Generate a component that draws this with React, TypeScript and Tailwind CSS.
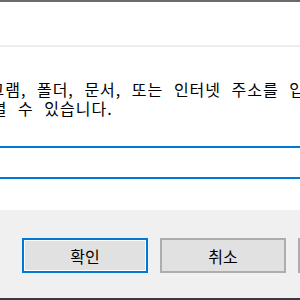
const font = "font-['Malgun_Gothic','Noto_Sans_CJK_KR',sans-serif]";

function DialogButton({ label, primary }: { label: string; primary?: boolean }) {
  return (
    <button
      className={
        primary
          ? "flex h-[35px] w-[126px] shrink-0 items-center justify-center border-2 border-[#0078d7] bg-[#e1e1e1] text-[16px] text-black shadow-[inset_0_0_0_1px_#ffffff]"
          : "flex h-[35px] w-[126px] shrink-0 items-center justify-center border-2 border-[#adadad] bg-[#e1e1e1] text-[16px] text-black"
      }
    >
      {label}
    </button>
  );
}

export default function App() {
  return (
    <div className={`flex h-[300px] w-[300px] flex-col overflow-hidden bg-white ${font}`}>
      {/* window edge */}
      <div className="h-[2px] shrink-0 bg-[#6b6b6b]" />
      <div className="h-[43px] shrink-0 bg-white" />
      <div className="h-[2px] shrink-0 bg-[#ededed]" />

      {/* prompt text */}
      <div className="flex h-[99px] shrink-0 flex-col overflow-hidden pt-[33px] text-[16px] leading-[19px] tracking-[1px] text-black whitespace-nowrap [word-spacing:6px]">
        <p className="ml-[-42px]">프로그램, 폴더, 문서, 또는 인터넷 주소를 입력하여</p>
        <p className="ml-[-66px]">항목을 열 수 있습니다.</p>
      </div>

      {/* input box */}
      <div className="-mx-2 h-[33px] shrink-0 border-y-2 border-[#0078d7] bg-white" />

      <div className="h-[31px] shrink-0 bg-white" />

      {/* footer */}
      <div className="flex flex-1 flex-col overflow-hidden bg-[#f0f0f0]">
        <div className="flex gap-[12px] pl-[22px] pt-[28px]">
          <DialogButton label="확인" primary />
          <DialogButton label="취소" />
          <DialogButton label="" />
        </div>
      </div>
      <div className="h-[2px] shrink-0 bg-[#3a3a3a]" />
    </div>
  );
}
